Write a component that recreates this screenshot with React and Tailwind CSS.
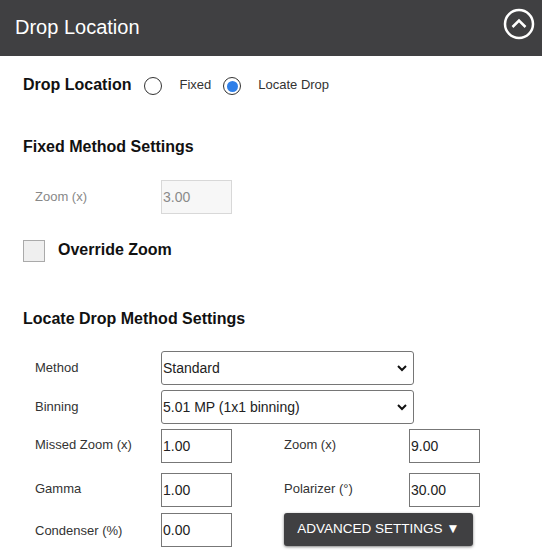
const font = { fontFamily: '"Liberation Sans", Arial, sans-serif' };

function Radio({ checked }) {
  return (
    <span className="inline-flex w-[18px] h-[18px] rounded-full border border-[#333] bg-white items-center justify-center">
      {checked && <span className="w-[11px] h-[11px] rounded-full bg-[#2f7fe8]" />}
    </span>
  );
}

function NumInput({ value, disabled }) {
  return (
    <div
      className={
        disabled
          ? 'w-[71px] h-[34px] border border-[#d8d8d8] bg-[#f7f7f7] text-[#8a8a8a] text-[14px] flex items-center px-[1px]'
          : 'w-[71px] h-[34px] border border-[#777] bg-white text-[#222] text-[14px] flex items-center px-[1px]'
      }
    >
      {value}
    </div>
  );
}

function Select({ value }) {
  return (
    <div className="w-[253px] h-[34px] border border-[#767676] rounded-[3px] bg-white flex items-center justify-between pl-[1px] pr-[6px] text-[14px] text-[#222]">
      <span>{value}</span>
      <svg width="10" height="8" viewBox="0 0 10 8">
        <path d="M1 2 L5 6 L9 2" fill="none" stroke="#111" strokeWidth="2" />
      </svg>
    </div>
  );
}

function Label({ children, className = '' }) {
  return <div className={'w-[126px] text-[13px] text-[#333] ' + className}>{children}</div>;
}

export default function App() {
  return (
    <div className="w-[542px] h-[554px] bg-white overflow-hidden" style={font}>
      <div className="h-[56px] bg-[#404042] flex items-center justify-between pl-[15px] pr-[7px]">
        <span className="text-white text-[20px] -mt-[2px]">Drop Location</span>
        <svg width="32" height="32" viewBox="0 0 32 32" className="-mt-[9px]">
          <circle cx="16" cy="16" r="14" fill="none" stroke="#fff" strokeWidth="2.5" />
          <path d="M9.5 19 L16 12.5 L22.5 19" fill="none" stroke="#fff" strokeWidth="2.5" />
        </svg>
      </div>

      <div className="pl-[23px]">
        <div className="flex items-center h-[20px] mt-[20px]">
          <span className="text-[16px] font-bold text-[#111] mr-[13px] -mt-[3px]">Drop Location</span>
          <Radio />
          <span className="text-[13px] text-[#333] ml-[17px] mr-[12px] -mt-[2px]">Fixed</span>
          <Radio checked />
          <span className="text-[13px] text-[#333] ml-[17px] -mt-[2px]">Locate Drop</span>
        </div>

        <div className="text-[16px] font-bold text-[#111] mt-[39px]">Fixed Method Settings</div>

        <div className="flex items-center mt-[21px] pl-[12px]">
          <Label className="text-[#888]">Zoom (x)</Label>
          <NumInput value="3.00" disabled />
        </div>

        <div className="flex items-center mt-[26px]">
          <span className="w-[22px] h-[22px] border border-[#aaa] bg-[#efefef]" />
          <span className="text-[16px] font-bold text-[#111] ml-[13px] -mt-[3px]">Override Zoom</span>
        </div>

        <div className="text-[16px] font-bold text-[#111] mt-[45px]">Locate Drop Method Settings</div>

        <div className="pl-[12px] mt-[20px]">
          <div className="flex items-center">
            <Label>Method</Label>
            <Select value="Standard" />
          </div>
          <div className="flex items-center mt-[5px]">
            <Label>Binning</Label>
            <Select value="5.01 MP (1x1 binning)" />
          </div>
          <div className="flex items-center mt-[5px]">
            <Label className="-mt-[2px]">Missed Zoom (x)</Label>
            <NumInput value="1.00" />
            <div className="w-[125px] ml-[52px] text-[13px] text-[#333] -mt-[2px]">Zoom (x)</div>
            <NumInput value="9.00" />
          </div>
          <div className="flex items-center mt-[10px]">
            <Label className="-mt-[2px]">Gamma</Label>
            <NumInput value="1.00" />
            <div className="w-[125px] ml-[52px] text-[13px] text-[#333] -mt-[2px]">Polarizer (°)</div>
            <NumInput value="30.00" />
          </div>
          <div className="flex items-center mt-[6px]">
            <Label className="mt-[2px]">Condenser (%)</Label>
            <NumInput value="0.00" />
            <button className="ml-[52px] w-[189px] h-[33px] bg-[#404042] rounded-[3px] text-white text-[13.5px] shadow-[0_1px_3px_rgba(0,0,0,0.5)] flex items-center justify-center -mt-[1px]">
              ADVANCED SETTINGS ▼
            </button>
          </div>
        </div>
      </div>
    </div>
  );
}
